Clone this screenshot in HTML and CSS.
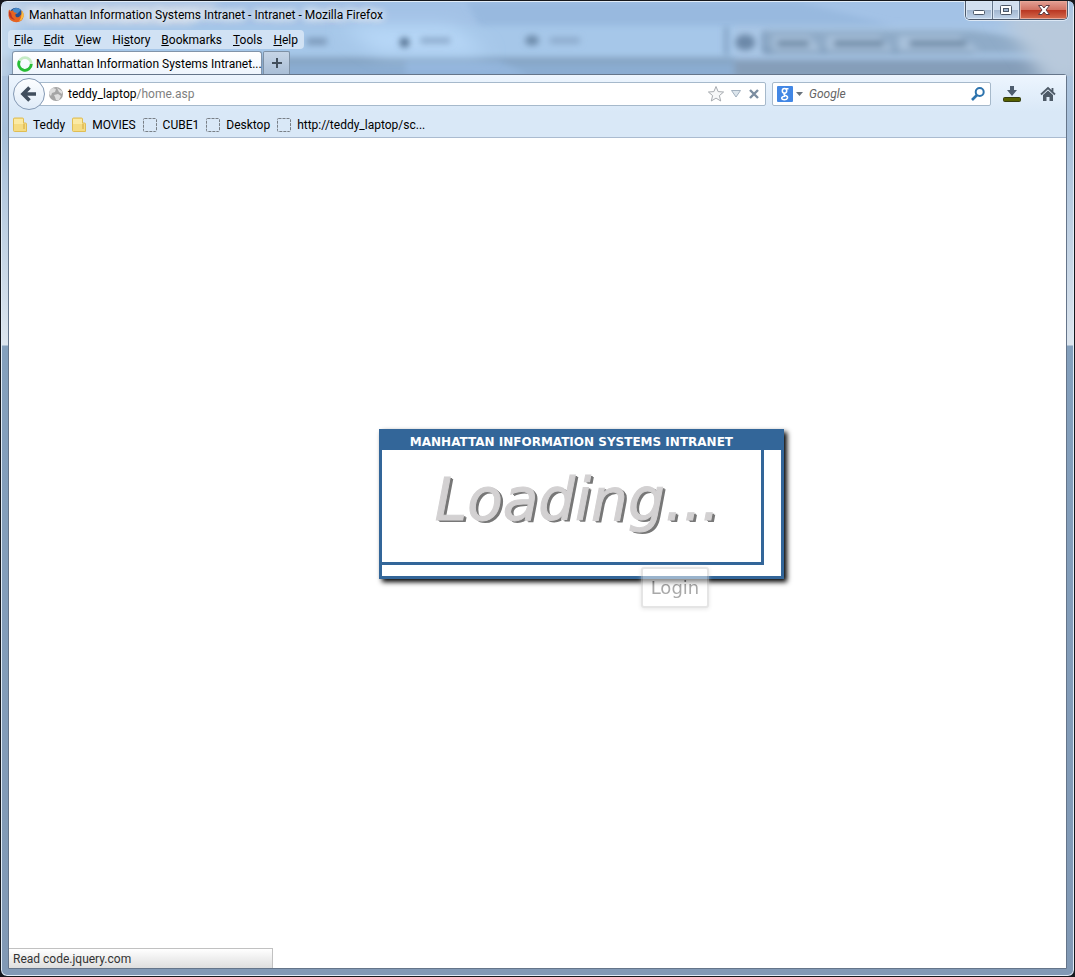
FILE: index.html
```html
<!DOCTYPE html>
<html lang="en">
<head>
<meta charset="utf-8">
<title>Manhattan Information Systems Intranet - Intranet</title>
<link rel="stylesheet" href="styles.css">
</head>
<body>
<div class="window">
  <svg class="glass" viewBox="0 0 1075 75" preserveAspectRatio="none" aria-hidden="true">
    <defs>
      <filter id="soft"><feGaussianBlur stdDeviation="3"/></filter>
      <filter id="wide" x="-20%" width="140%" y="-50%" height="200%"><feGaussianBlur stdDeviation="9"/></filter>
      <linearGradient id="low" x1="0" y1="0" x2="0" y2="1"><stop offset="0" stop-color="#7f9bb8"/><stop offset=".35" stop-color="#8badd1"/><stop offset="1" stop-color="#8babd0"/></linearGradient>
    </defs>
    <rect width="1075" height="75" fill="#a3c2e6"/>
    <g filter="url(#soft)">
      <path d="M0 0H220L180 30H0z" fill="#bccfe6"/>
      <path d="M466 0H800L900 25H480z" fill="#98b9df"/>
      <rect x="-10" y="24" width="1095" height="32" fill="#a6c7e9"/>
      <path d="M735 56H1085V24H735z" fill="#a9c6e5"/>
      <rect x="-10" y="56" width="745" height="25" fill="url(#low)"/>
      <path d="M405 60H500L530 75H405z" fill="#93b5dc"/>
      <rect x="735" y="58" width="345" height="20" fill="#859eb9"/>
      <path d="M765 29H975L1075 44V52H765z" fill="#8fabc8"/>
    </g>
    <g filter="url(#wide)">
      <path d="M340 25H450L490 52H380z" fill="#b8d8f8"/>
      <path d="M1000 10H1090V85H1050z" fill="#b8c9dc"/>
      <path d="M-10 -10H10V85H-10z" fill="#ccddec"/>
    </g>
    <g filter="url(#soft)">
      <path d="M727 25V54M765 30V50H975" stroke="#7290b1" stroke-width="3" fill="none"/>
      <circle cx="404" cy="41" r="5" fill="#52708f"/>
      <ellipse cx="532" cy="39" rx="7" ry="5" fill="#6c89a8"/>
      <ellipse cx="746" cy="41" rx="10" ry="8" fill="#6c88a8"/>
      <path d="M306 40H326" stroke="#7c99ba" stroke-width="7"/>
      <path d="M420 39H450M550 39H580" stroke="#8ba9ca" stroke-width="6"/>
      <path d="M774 34H810L822 50H774zM828 34H880L895 50H828zM900 34H960L982 50H900z" fill="#a8c1db"/>
      <path d="M778 42H810M835 42H885M911 42H968" stroke="#67839f" stroke-width="6"/>
    </g>
  </svg>

  <header class="titlebar">
    <svg class="fox" viewBox="0 0 16 16" aria-hidden="true">
      <circle cx="8" cy="7.5" r="6.8" fill="#234f91"/>
      <path d="M5 2Q10-.5 13 3L9 7 5 6z" fill="#478ac7"/>
      <path d="M1 2.5L2.8 4 5 3.2 6 5.2 9 6 7.2 7.7 8 10Q11 11 12 8.8L13.7 7 13.5 3.5Q16 5.5 15.6 9.5Q14.5 15 8.5 15.3Q1.5 15 .5 9Q0 5 1 2.5z" fill="#e66320"/>
      <path d="M13.5 3.5Q16 5.5 15.6 9.5Q14.5 13 11 14.5Q14 10 13.5 3.5z" fill="#f7bb38"/>
      <path d="M1 4L3 6 4 10 7 13Q2 12 1 8z" fill="#b93427"/>
    </svg>
    <h1 class="title">Manhattan Information Systems Intranet - Intranet - Mozilla Firefox</h1>
    <div class="controls">
      <button class="control minimize" aria-label="Minimize"><svg viewBox="0 0 14 12"><rect x="1.5" y="6.5" width="11" height="4" rx="1" fill="#fff" stroke="#4d5868"/></svg></button>
      <button class="control maximize" aria-label="Maximize"><svg viewBox="0 0 14 12"><rect x="1.5" y="1.5" width="11" height="9" rx="1" fill="#fff" stroke="#4d5868"/><rect x="4.500" y="4.500" width="5" height="3" fill="#9db4d0" stroke="#4d5868"/></svg></button>
      <button class="control close" aria-label="Close"><svg viewBox="0 0 14 12"><path d="M1.500 1.500H5L7 4 9 1.500H12.500L9 6l3.500 4.500H9L7 8l-2 2.500H1.500L5 6z" fill="#fff" stroke="#5b3b42"/></svg></button>
    </div>
  </header>

  <nav class="menu" aria-label="Menu">
    <button><u>F</u>ile</button><button><u>E</u>dit</button><button><u>V</u>iew</button><button>Hi<u>s</u>tory</button><button><u>B</u>ookmarks</button><button><u>T</u>ools</button><button><u>H</u>elp</button>
  </nav>

  <div class="tabs">
    <button class="tab">
      <svg class="spinner" viewBox="0 0 16 16" aria-hidden="true"><circle cx="8" cy="8" r="6.300" fill="none" stroke="#c5ebc5" stroke-width="2.800"/><path d="M2.500 4.900A6.300 6.300 0 1 0 14.300 8" fill="none" stroke="#27bd35" stroke-width="2.800"/></svg>
      <span>Manhattan Information Systems Intranet...</span>
    </button>
    <button class="newtab" aria-label="New tab"><svg viewBox="0 0 12 12"><path d="M6 1V11M1 6H11" stroke="#424f5c" stroke-width="2"/></svg></button>
  </div>

  <div class="browser">
    <div class="toolbar">
      <button class="back" aria-label="Back"><svg viewBox="0 0 18 18"><path d="M9.500 2.500L3 9l6.500 6.500M4 9H16" fill="none" stroke="#414e5d" stroke-width="3.600"/></svg></button>
      <div class="address">
        <svg class="globe" viewBox="0 0 16 16" aria-hidden="true"><circle cx="8" cy="8" r="7" fill="#a5a5a5"/><path d="M2 4l3-2 3 1-1 3-3 1-1 3-2-2zM9 2l5 3v3l-3-2zM6 9l4-1 3 2-2 4-3 0-1-3z" fill="#dedede"/></svg>
        <a class="url" href="#">teddy_laptop<span>/home.asp</span></a>
        <button class="star" aria-label="Bookmark this page"><svg viewBox="0 0 18 18"><path d="M9 1.500l2.100 5.100 5.500.4-4.200 3.600 1.300 5.400L9 13.100 4.300 16l1.300-5.400L1.400 7l5.500-.4z" fill="#f7f8f9" stroke="#a7abb0"/></svg></button>
        <button class="history" aria-label="Show history"><svg viewBox="0 0 12 10"><path d="M1.500 1.500H10.500L6 8z" fill="#dce5ec" stroke="#a3b1bf"/></svg></button>
        <button class="stop" aria-label="Stop"><svg viewBox="0 0 12 12"><path d="M2 2l8 8M10 2l-8 8" stroke="#7b8da0" stroke-width="2.400"/></svg></button>
      </div>
      <form class="search">
        <svg class="google" viewBox="0 0 16 16" aria-hidden="true"><rect width="16" height="16" rx="1" fill="#4287e5"/><g fill="none" stroke="#fff" stroke-width="1.500"><ellipse cx="7.500" cy="4.800" rx="2.200" ry="2.400"/><path d="M9 2.700H11.500M8 7.200Q6 8.300 8 9.200Q11 10.300 10.500 12Q9.800 13.800 7.500 13.800Q4.700 13.600 4.700 12Q5 10.300 8 10.200"/></g></svg>
        <svg class="arrow" viewBox="0 0 7 4" aria-hidden="true"><path d="M0 0H7L3.500 4z" fill="#68727c"/></svg>
        <input type="text" placeholder="Google" aria-label="Search Google">
        <button aria-label="Search"><svg viewBox="0 0 16 16"><circle cx="9.700" cy="6" r="4" fill="none" stroke="#2d73ad" stroke-width="2"/><path d="M7 9L2 14" stroke="#2d73ad" stroke-width="2.600"/></svg></button>
      </form>
      <button class="download" aria-label="Downloads"><svg viewBox="0 0 18 16"><path d="M7 0h4v4h3L9 10 4 4h3z" fill="#4e5d6e"/><rect x=".5" y="11.500" width="17" height="4" rx="1" fill="#566000" stroke="#343c12"/></svg></button>
      <button class="home" aria-label="Home"><svg viewBox="0 0 16 16"><path d="M1 8.500L8 2l7 6.500M12.500 2v4" fill="none" stroke="#4e5a67" stroke-width="1.800"/><path d="M3 9l5-4.500L13 9v6H9.500v-4h-3v4H3z" fill="#4e5a67"/></svg></button>
    </div>

    <nav class="bookmarks" aria-label="Bookmarks">
      <a href="#"><svg viewBox="0 0 16 16"><path d="M1.500 2q0-1 1-1h8q1 0 1 1v4h2q1 0 1 1v7.500H2.500q-1 0-1-1z" fill="#f5dc83" stroke="#dfbd55"/><path d="M2 2h9v5H2z" fill="#fbeaa4"/><path d="M12 7v5" stroke="#d2a73d"/></svg>Teddy</a>
      <a href="#"><svg viewBox="0 0 16 16"><path d="M1.500 2q0-1 1-1h8q1 0 1 1v4h2q1 0 1 1v7.500H2.500q-1 0-1-1z" fill="#f5dc83" stroke="#dfbd55"/><path d="M2 2h9v5H2z" fill="#fbeaa4"/><path d="M12 7v5" stroke="#d2a73d"/></svg>MOVIES</a>
      <a href="#"><svg viewBox="0 0 16 16"><rect x="1.500" y="1.500" width="13" height="13" rx="1" class="blank"/></svg>CUBE1</a>
      <a href="#"><svg viewBox="0 0 16 16"><rect x="1.500" y="1.500" width="13" height="13" rx="1" class="blank"/></svg>Desktop</a>
      <a href="#"><svg viewBox="0 0 16 16"><rect x="1.500" y="1.500" width="13" height="13" rx="1" class="blank"/></svg>http://teddy_laptop/sc...</a>
    </nav>

    <main class="page">
      <section class="dialog">
        <div class="panel">
          <h2>MANHATTAN INFORMATION SYSTEMS INTRANET</h2>
          <p class="loading">Loading...</p>
        </div>
        <button class="login">Login</button>
      </section>
      <div class="status" role="status">Read code.jquery.com</div>
    </main>
  </div>
</div>
</body>
</html>
```
FILE: styles.css
```css
* { box-sizing: border-box; }

body {
  margin: 0;
  background: #15171c;
  color: #000;
  font: 12px/16px "Segoe UI", Roboto, sans-serif;
}

button {
  margin: 0;
  padding: 0;
  border: 0;
  background: none;
  color: inherit;
  font: inherit;
}

svg { display: block; flex: none; }
a { color: inherit; text-decoration: none; }

.window {
  position: relative;
  display: flex;
  flex-direction: column;
  min-height: 100vh;
  padding: 0 7px 7px;
  overflow: hidden;
  border: 1px solid #15171c;
  border-radius: 7px;
  background: linear-gradient(#b3c9e2 0, #a6bfda 130px, #dce5ee 344px, #84a0bd 345px, #8199b5 100%);
  box-shadow: inset 0 0 0 1px #e2edf8;
}

.glass {
  position: absolute;
  inset: 1px 1px auto;
  width: calc(100% - 2px);
  height: 74px;
}

.titlebar, .menu, .tabs, .browser { position: relative; }

.titlebar {
  display: flex;
  align-items: flex-start;
  height: 29px;
}

.fox { width: 16px; height: 16px; margin-top: 6px; }

.title {
  flex: 1;
  margin: 6px 0 0 5px;
  font-size: 12px;
  font-weight: 400;
  line-height: 16px;
  text-shadow: 0 0 8px #fff, 0 0 8px #fff, 0 0 12px #fff;
}

.controls {
  display: flex;
  overflow: hidden;
  margin-right: -1px;
  border: 1px solid #4d596b;
  border-top: 0;
  border-radius: 0 0 5px 5px;
  box-shadow: 0 0 0 1px #dce8f5;
}

.control {
  display: flex;
  align-items: center;
  justify-content: center;
  width: 27px;
  height: 18px;
  border-right: 1px solid #66768b;
  background: linear-gradient(#d2dfef 0 50%, #a2b6cf 50%, #c1d4ea);
  box-shadow: inset 0 0 0 1px #d9e6f4;
}
.control svg { width: 14px; height: 12px; }
.close {
  width: 47px;
  border: 0;
  background: linear-gradient(#e3a095, #d17364 48%, #b83420 50%, #d46c4f);
  box-shadow: inset 0 0 0 1px #e8a798;
}

.menu {
  display: flex;
  align-self: flex-start;
  gap: 11px;
  height: 19px;
  padding: 1px 6px 0;
  border-radius: 4px;
  background: #dce9f6cc;
}
.menu button { line-height: 18px; }

.tabs { display: flex; gap: 1px; height: 25px; padding: 2px 0 0 4px; }
.tab {
  display: flex;
  align-items: center;
  gap: 3px;
  width: 250px;
  padding: 1px 3px 0 4px;
  border: 1px solid #8194aa;
  border-bottom: 0;
  border-radius: 3px 3px 0 0;
  background: linear-gradient(#fff, #eef5fd);
  white-space: nowrap;
}
.spinner { width: 16px; height: 16px; }
.newtab {
  display: flex;
  align-items: center;
  justify-content: center;
  width: 27px;
  border: 1px solid #7e91a5;
  border-bottom: 0;
  border-radius: 2px 2px 0 0;
  background: linear-gradient(#c6d5e6, #a9bed6);
}
.newtab svg { width: 12px; height: 12px; }

.browser {
  display: flex;
  flex: 1;
  flex-direction: column;
  border: 1px solid #65758a;
  border-radius: 3px 3px 0 0;
  background: #d9e8f7;
}

.toolbar {
  display: flex;
  align-items: center;
  height: 37px;
  padding: 0 10px 0 4px;
  background: linear-gradient(#edf5fe, #d9e8f7);
}

.back {
  z-index: 1;
  display: flex;
  align-items: center;
  justify-content: center;
  width: 32px;
  height: 32px;
  border: 1px solid #8499b4;
  border-radius: 50%;
  background: linear-gradient(#fdfeff, #dfebf8);
}
.back svg { width: 18px; height: 18px; }

.address, .search {
  display: flex;
  align-items: center;
  height: 24px;
  border: 1px solid #a6b9cb;
  border-radius: 2px;
  background: #fff;
}
.address { flex: 1; margin-left: -8px; padding: 0 5px 0 10px; }
.globe { width: 16px; height: 16px; }
.url { flex: 1; margin-left: 4px; }
.url span { color: #808080; }
.star svg { width: 18px; height: 18px; }
.history svg { width: 12px; height: 10px; margin-left: 5px; }
.stop svg { width: 12px; height: 12px; margin-left: 6px; }

.search { width: 219px; margin-left: 6px; padding: 0 4px; }
.google { width: 16px; height: 16px; }
.arrow { width: 7px; height: 4px; margin: 0 6px 0 3px; }
.search input {
  flex: 1;
  min-width: 0;
  padding: 0;
  border: 0;
  outline: 0;
  background: none;
  font: inherit;
}
.search input::placeholder { color: #656565; font-style: italic; opacity: 1; }
.search button svg { width: 16px; height: 16px; }
.download { margin-left: 12px; }
.download svg { width: 18px; height: 16px; }
.home { margin-left: 19px; }
.home svg { width: 16px; height: 16px; }

.bookmarks {
  display: flex;
  align-items: center;
  gap: 6px;
  height: 26px;
  padding: 0 3px;
  border-bottom: 1px solid #aabbd0;
}
.bookmarks a { display: flex; align-items: center; gap: 5px; }
.bookmarks svg { width: 16px; height: 16px; }
.blank { fill: none; stroke: #787f86; stroke-dasharray: 3 1; }

.page {
  position: relative;
  flex: 1;
  padding: 291px 0 60px 35%;
  background: #fff;
}

.dialog {
  position: relative;
  width: 405px;
  height: 150px;
  border: 3px solid #369;
  background: linear-gradient(#369 18px, #fff 18px);
  box-shadow: 3px 3px 5px #000;
}
.panel {
  width: 382px;
  height: 133px;
  border: solid #369;
  border-width: 0 3px 3px 0;
}
.panel h2 {
  margin: 0;
  color: #fff;
  font: bold 12px/20px Verdana, "DejaVu Sans", sans-serif;
  text-align: center;
  white-space: nowrap;
}
.loading {
  margin: 12px 0 0 12px;
  color: #d3d1d2;
  font: italic 58px/72px "Lucida Handwriting", "DejaVu Sans", cursive;
  text-align: center;
  text-shadow: 2px 1px #777, 3px 2px #777;
  -webkit-text-stroke: 1px #d3d1d2;
}
.login {
  position: absolute;
  top: 135px;
  left: 259px;
  width: 68px;
  height: 41px;
  border: 2px solid #ccc;
  border-radius: 3px;
  background: #fff;
  box-shadow: 0 1px 4px #ccc;
  color: #555;
  font: 18px/36px Verdana, "DejaVu Sans", sans-serif;
  opacity: .5;
}

.status {
  position: absolute;
  bottom: 0;
  left: 0;
  width: 264px;
  padding: 2px 4px 1px;
  border: 1px solid #c1c1c1;
  border-width: 1px 1px 0 0;
  background: linear-gradient(#fff, #dedede);
  color: #333;
}
```
